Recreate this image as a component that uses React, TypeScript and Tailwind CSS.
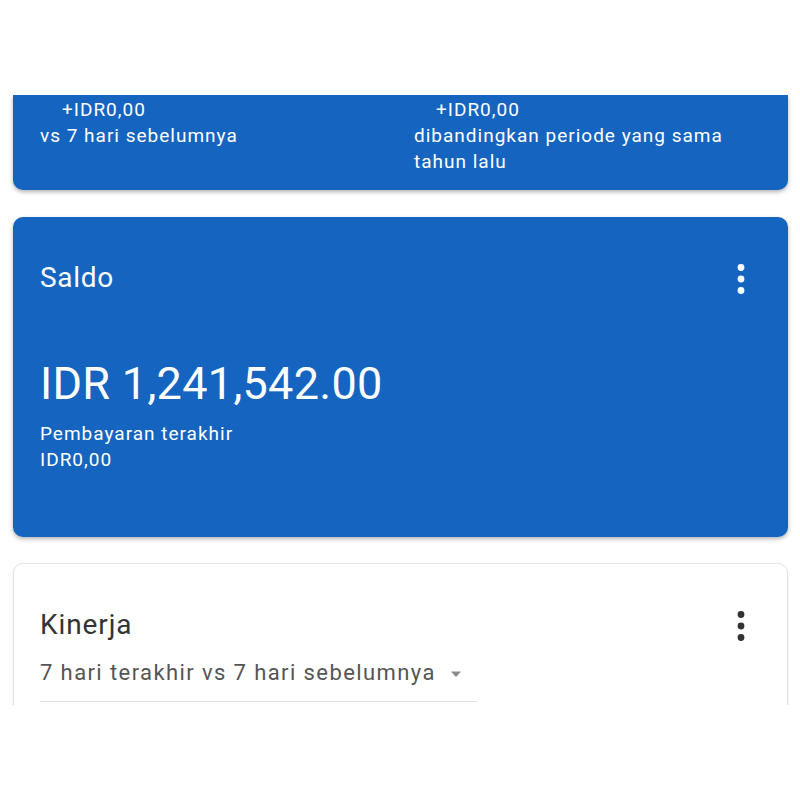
import React from 'react';

const Dots = ({ color }: { color: string }) => (
  <svg width="8" height="30" viewBox="0 0 8 30" className={color}>
    <circle cx="4" cy="3.5" r="3.4" fill="currentColor" />
    <circle cx="4" cy="15" r="3.4" fill="currentColor" />
    <circle cx="4" cy="26.5" r="3.4" fill="currentColor" />
  </svg>
);

export default function App() {
  return (
    <div className="h-[800px] bg-white font-['Roboto',sans-serif]">
      <div className="h-[95px]" />
      <div className="h-[610px] overflow-hidden px-[13px] pr-[12px]">
        {/* summary card, scrolled past its top */}
        <div className="h-[95px] pt-[2px] bg-[#1565c0] rounded-b-[10px] shadow-[0_2px_4px_rgba(0,0,0,0.3)] text-white text-[19px] leading-[26px] tracking-[1px] flex">
          <div className="w-[374px] pl-[27px]">
            <div className="pl-[22px]">+IDR0,00</div>
            <div>vs 7 hari sebelumnya</div>
          </div>
          <div className="flex-1 pl-[27px]">
            <div className="pl-[22px]">+IDR0,00</div>
            <div>dibandingkan periode yang sama<br />tahun lalu</div>
          </div>
        </div>

        {/* Saldo */}
        <div className="mt-[27px] h-[320px] bg-[#1565c0] rounded-[10px] shadow-[0_2px_4px_rgba(0,0,0,0.3)] text-white px-[27px] pt-[45px]">
          <div className="flex items-center justify-between">
            <div className="text-[28px] leading-[32px] tracking-[0.7px]">Saldo</div>
            <div className="pr-[16px] pt-[2px]">
              <Dots color="text-white" />
            </div>
          </div>
          <div className="mt-[64px] text-[45px] leading-[52px] tracking-[0.3px]">IDR 1,241,542.00</div>
          <div className="mt-[11px] text-[19px] leading-[26px] tracking-[1px]">Pembayaran terakhir</div>
          <div className="text-[19px] leading-[26px] tracking-[1px]">IDR0,00</div>
        </div>

        {/* Kinerja */}
        <div className="mt-[26px] h-[300px] bg-white rounded-[10px] border border-[#e3e3e3] shadow-[0_1px_3px_rgba(0,0,0,0.08)] px-[26px] pt-[45px]">
          <div className="flex items-center justify-between">
            <div className="text-[28px] leading-[32px] tracking-[0.9px] text-[#333333]">Kinerja</div>
            <div className="pr-[16px] pt-[2px]">
              <Dots color="text-[#333333]" />
            </div>
          </div>
          <div className="mt-[18px] w-[437px] border-b border-[#e0e0e0] pb-[14px] flex items-center">
            <span className="text-[22px] leading-[28px] tracking-[1.4px] text-[#555555]">7 hari terakhir vs 7 hari sebelumnya</span>
            <svg width="12" height="7" viewBox="0 0 12 7" className="ml-[14px] mt-[2px]">
              <path d="M1 0.5 L11 0.5 L6 6 Z" fill="#8a8a8a" />
            </svg>
          </div>
        </div>
      </div>
    </div>
  );
}
